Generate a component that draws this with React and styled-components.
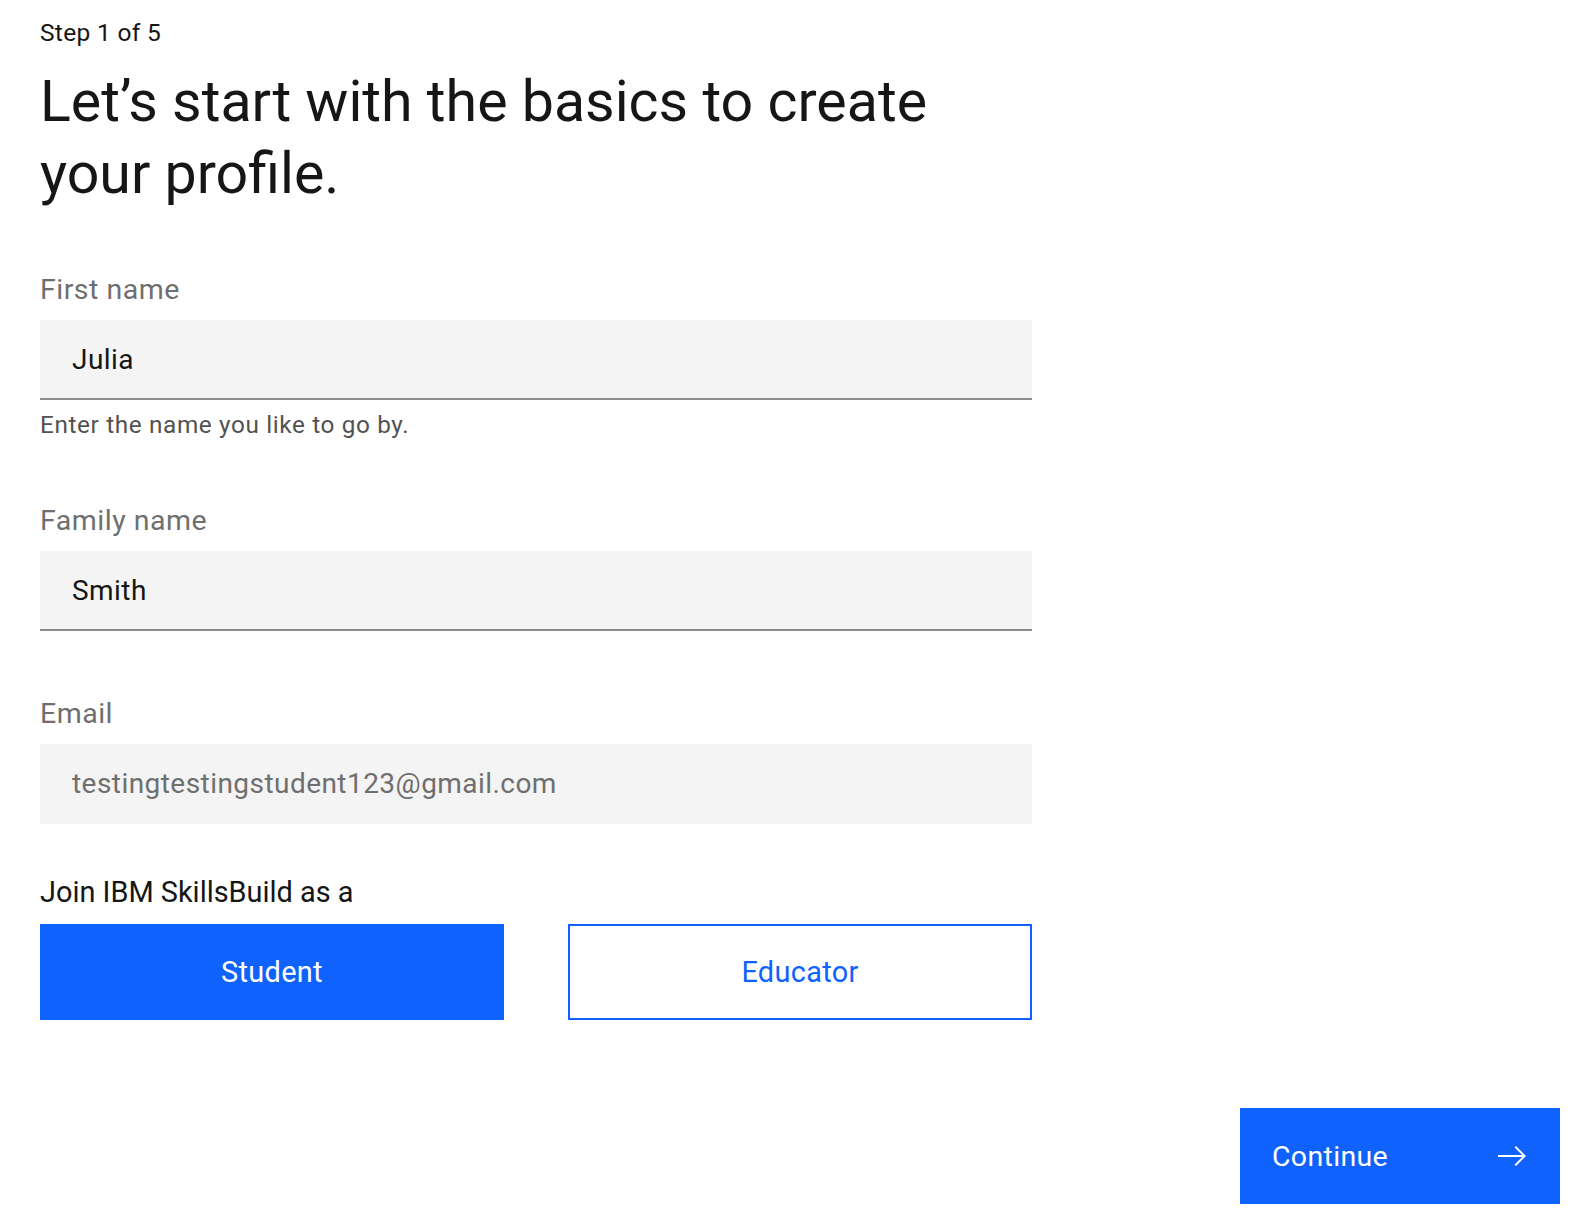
import React from "react";
import styled, { createGlobalStyle } from "styled-components";

const GlobalStyle = createGlobalStyle`
  html, body {
    margin: 0;
    padding: 0;
    background: #ffffff;
  }
  body {
    font-family: Roboto, "Noto Sans", Arial, sans-serif;
    color: #161616;
    -webkit-font-smoothing: antialiased;
  }
  * { box-sizing: border-box; }
`;

const Page = styled.div`
  width: 1584px;
  min-height: 1232px;
  display: flex;
  flex-direction: column;
  padding: 16px 24px 28px 40px;
`;

const Form = styled.form`
  width: 992px;
  display: flex;
  flex-direction: column;
`;

const Step = styled.div`
  font-size: 24.5px;
  line-height: 34px;
  letter-spacing: 0.32px;
  color: #161616;
`;

const Heading = styled.h1`
  margin: 16px 0 0;
  max-width: 905px;
  font-size: 57.3px;
  line-height: 72px;
  font-weight: 400;
  color: #161616;
`;

const Field = styled.div`
  display: flex;
  flex-direction: column;
  margin-top: ${(p) => p.$gap}px;
`;

const Label = styled.label`
  font-size: 28.5px;
  line-height: 32px;
  letter-spacing: 0.5px;
  color: #6f6f6f;
  margin-bottom: 14px;
`;

const Input = styled.input`
  height: 80px;
  width: 100%;
  border: none;
  border-bottom: 2px solid ${(p) => (p.readOnly ? "transparent" : "#8d8d8d")};
  background: #f4f4f4;
  padding: 0 32px;
  font-family: inherit;
  font-size: 28px;
  letter-spacing: 0.45px;
  color: ${(p) => (p.readOnly ? "#6f6f6f" : "#161616")};
  outline: none;
`;

const Helper = styled.div`
  margin-top: 9px;
  font-size: 24.3px;
  line-height: 32px;
  letter-spacing: 0.64px;
  color: #525252;
`;

const RoleLabel = styled.div`
  margin-top: 52px;
  font-size: 28.9px;
  line-height: 32px;
  color: #161616;
`;

const RoleRow = styled.div`
  margin-top: 16px;
  display: grid;
  grid-template-columns: 1fr 1fr;
  gap: 64px;
`;

const RoleButton = styled.button`
  height: 96px;
  border: 2px solid #0f62fe;
  background: ${(p) => (p.$selected ? "#0f62fe" : "#ffffff")};
  color: ${(p) => (p.$selected ? "#ffffff" : "#0f62fe")};
  font-family: inherit;
  font-size: 28.9px;
  letter-spacing: 0.32px;
  cursor: pointer;
`;

const Footer = styled.div`
  margin-top: 88px;
  display: flex;
  justify-content: flex-end;
`;

const ContinueButton = styled.button`
  width: 320px;
  height: 96px;
  border: none;
  background: #0f62fe;
  color: #ffffff;
  display: flex;
  align-items: center;
  justify-content: space-between;
  padding: 0 32px;
  font-family: inherit;
  font-size: 28.5px;
  letter-spacing: 0.32px;
  cursor: pointer;
`;

const ArrowRight = () => (
  <svg width="32" height="32" viewBox="0 0 16 16" fill="#ffffff" aria-hidden="true">
    <path d="M9.3 3.7L13.1 7.5 1 7.5 1 8.5 13.1 8.5 9.3 12.3 10 13 15 8 10 3z" />
  </svg>
);

export default function App() {
  return (
    <>
      <GlobalStyle />
      <Page>
        <Form onSubmit={(e) => e.preventDefault()}>
          <Step>Step 1 of 5</Step>
          <Heading>Let’s start with the basics to create your profile.</Heading>

          <Field $gap={64}>
            <Label htmlFor="first">First name</Label>
            <Input id="first" defaultValue="Julia" />
            <Helper>Enter the name you like to go by.</Helper>
          </Field>

          <Field $gap={64}>
            <Label htmlFor="family">Family name</Label>
            <Input id="family" defaultValue="Smith" />
          </Field>

          <Field $gap={67}>
            <Label htmlFor="email">Email</Label>
            <Input id="email" readOnly value="testingtestingstudent123@gmail.com" />
          </Field>

          <RoleLabel>Join IBM SkillsBuild as a</RoleLabel>
          <RoleRow>
            <RoleButton type="button" $selected>Student</RoleButton>
            <RoleButton type="button">Educator</RoleButton>
          </RoleRow>
        </Form>
        <Footer>
          <ContinueButton type="button">
            <span>Continue</span>
            <ArrowRight />
          </ContinueButton>
        </Footer>
      </Page>
    </>
  );
}
